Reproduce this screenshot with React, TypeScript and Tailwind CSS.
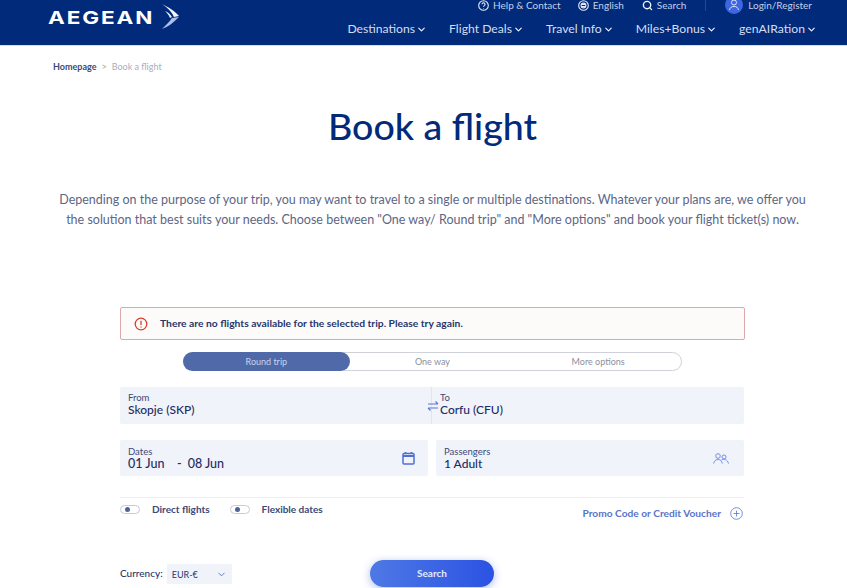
import { ChevronDown, Search } from 'lucide-react';

const navItems = ['Destinations', 'Flight Deals', 'Travel Info', 'Miles+Bonus', 'genAIRation'];

function Logo() {
  return (
    <div className="flex items-center">
      <span className="inline-block w-[105px] origin-left scale-x-[1.25] text-[18px] leading-none font-bold tracking-[1.5px] text-white font-['Inter',sans-serif]">
        AEGEAN
      </span>
      <svg width="19" height="26" viewBox="0 0 19 26" className="ml-[8px] -mt-[1px]">
        <path d="M1 0 C7 3 14 7 18 12 L13 13 C11 8 7 4 1 0Z" fill="#f2f5fc" />
        <path d="M4 7 C7 8 9 10 11 13 L9 14 C8 11 6 9 4 7Z" fill="#e8eefb" />
        <path d="M18 13 C13 18 7 23 1 25 C5 21 9 17 11 14 Z" fill="#a9c0ea" />
      </svg>
    </div>
  );
}

function TopLink({ icon, label }: { icon: React.ReactNode; label: string }) {
  return (
    <div className="flex items-center gap-[4px] text-[10px] leading-[10px] text-[#c3d0ea]">
      {icon}
      <span>{label}</span>
    </div>
  );
}

function SwapIcon() {
  return (
    <svg width="12" height="12" viewBox="0 0 12 12" fill="none" stroke="#5a74d6" strokeWidth="1.100">
      <path d="M1 4h10M8.500 1.500 11 4M11 8H1M3.500 10.500 1 8" />
    </svg>
  );
}

function Field({ label, value, className }: { label: string; value: string; className?: string }) {
  return (
    <div className={className}>
      <div className="text-[9.500px] leading-[11px] text-[#3c4a78]">{label}</div>
      <div className="text-[12px] leading-[14px] font-medium text-[#1f2c63]">{value}</div>
    </div>
  );
}

function Toggle() {
  return (
    <div className="flex h-[9px] w-[20px] items-center rounded-full border border-[#c5cbdc] bg-white pl-[4px]">
      <div className="h-[5px] w-[5px] rounded-full bg-[#4f6398]" />
    </div>
  );
}

export default function App() {
  return (
    <div className="h-[588px] overflow-hidden bg-white font-['Lato',sans-serif]">
      <header className="h-[46px] border-b border-[#d5e0f3] bg-[#012a7a]">
        <div className="ml-12 flex w-[769px] justify-between">
          <div className="pt-[5px]">
            <Logo />
          </div>
          <div className="flex flex-col items-end">
            <div className="mr-[5px] flex h-[10px] items-center">
              <TopLink
                label="Help & Contact"
                icon={
                  <svg width="11" height="11" viewBox="0 0 11 11" fill="none" stroke="#e6ecf8" strokeWidth="1.100">
                    <circle cx="5.500" cy="5.500" r="4.800" />
                    <path d="M4 4.300a1.500 1.500 0 1 1 2.300 1.300c-.5.300-.8.600-.8 1.100M5.500 8v.5" />
                  </svg>
                }
              />
              <div className="ml-[17px]">
                <TopLink
                  label="English"
                  icon={
                    <svg width="11" height="11" viewBox="0 0 11 11" fill="none" stroke="#e6ecf8" strokeWidth="1.100">
                      <circle cx="5.500" cy="5.500" r="4.800" />
                      <circle cx="5.500" cy="5.500" r="2.400" />
                      <path d="M3.200 4.500h4.600M3.200 6.500h4.600" />
                    </svg>
                  }
                />
              </div>
              <div className="ml-[18px]">
                <TopLink label="Search" icon={<Search size={11} strokeWidth={3} color="#f1f5fc" />} />
              </div>
              <div className="ml-[19px] h-[12px] w-px bg-[#27488f]" />
              <div className="ml-[19px] flex items-center gap-[5px] text-[10px] leading-[10px] text-[#c3d0ea]">
                <div className="flex h-[18px] w-[18px] items-center justify-center rounded-full bg-[#3d66e0]">
                  <svg width="12" height="12" viewBox="0 0 12 12" fill="none" stroke="#dbe5fb" strokeWidth="1">
                    <circle cx="6" cy="3.500" r="2.500" />
                    <path d="M1.500 11c.5-2.500 2-3.500 4.500-3.500s4 1 4.500 3.500" />
                  </svg>
                </div>
                <span>Login/Register</span>
              </div>
            </div>
            <nav className="mt-[11px] flex gap-[22px]">
              {navItems.map((item) => (
                <div key={item} className="flex items-center gap-[1px] text-[12.200px] leading-[16px] text-[#d3def2]">
                  {item}
                  <ChevronDown size={11} strokeWidth={2.500} color="#f1f5fc" />
                </div>
              ))}
            </nav>
          </div>
        </div>
      </header>

      <main className="ml-12 w-[769px]">
        <div className="mt-[15px] flex gap-[5px] pl-[5px] text-[9px] leading-[12px]">
          <span className="font-bold text-[#3b4a78]">Homepage</span>
          <span className="text-[#9aa1b5]">&gt;</span>
          <span className="text-[#a9aebd]">Book a flight</span>
        </div>

        <h1 className="mt-[31px] text-center text-[37.500px] leading-[44px] font-medium text-[#012a7a]">
          Book a flight
        </h1>

        <p className="mt-[42px] px-[10px] text-center text-[12.500px] leading-[20px] text-[#5d6685]">
          Depending on the purpose of your trip, you may want to travel to a single or multiple destinations. Whatever your plans are, we offer you the solution that best suits your needs. Choose between "One way/ Round trip" and "More options" and book your flight ticket(s) now.
        </p>

        <section className="mx-[72px] mt-[77px]">
          <div className="flex h-[33px] items-center gap-[12px] rounded-[2px] border border-[#dba9a9] bg-[#fdfbf9] pl-[13px] text-[10.300px] font-bold text-[#27366b]">
            <svg width="14" height="14" viewBox="0 0 14 14" fill="none" stroke="#d8402f" strokeWidth="1.300">
              <circle cx="7" cy="7" r="5.800" />
              <path d="M7 3.700v4.200M7 9.600v.8" />
            </svg>
            <span>There are no flights available for the selected trip. Please try again.</span>
          </div>

          <div className="mx-[63px] mt-[12px] flex h-[19px] w-[499px] items-center rounded-full border border-[#cfd2da] text-center text-[9px] text-[#8a8fa0]">
            <div className="-ml-px flex h-[19px] w-[167px] items-center justify-center rounded-full bg-[#5069a8] text-[#c9d3ea]">
              Round trip
            </div>
            <div className="w-[166px]">One way</div>
            <div className="w-[166px]">More options</div>
          </div>

          <div className="mt-[16px] flex h-[37px] w-[624px] rounded-[2px] bg-[#f0f3f9]">
            <Field label="From" value="Skopje (SKP)" className="w-[312px] border-r border-[#e1e5ee] pl-[8px] pt-[5px]" />
            <div className="-ml-[5px] flex items-center">
              <SwapIcon />
            </div>
            <Field label="To" value="Corfu (CFU)" className="pt-[5px] pl-[1px]" />
          </div>

          <div className="mt-[16px] flex w-[624px] gap-[8px]">
            <div className="flex h-[36px] w-[308px] items-center justify-between rounded-[2px] bg-[#f0f3f9] pl-[8px] pr-[13px]">
              <div>
                <div className="text-[9.500px] leading-[11px] text-[#3c4a78]">Dates</div>
                <div className="flex text-[12.500px] leading-[13px] font-medium text-[#1f2c63]">
                  <span className="w-[49px]">01 Jun</span>
                  <span>-</span>
                  <span className="ml-[6px]">08 Jun</span>
                </div>
              </div>
              <svg width="13" height="14" viewBox="0 0 13 14" fill="none" stroke="#4f6fd8" strokeWidth="1.500">
                <rect x="1" y="2.500" width="11" height="10.500" rx="1" />
                <path d="M1 5h11M3.500 1v2M9.500 1v2" strokeWidth="1.800" />
              </svg>
            </div>
            <div className="flex h-[36px] w-[308px] items-center justify-between rounded-[2px] bg-[#f0f3f9] pl-[8px] pr-[15px]">
              <Field label="Passengers" value="1 Adult" />
              <svg width="16" height="11" viewBox="0 0 16 11" fill="none" stroke="#6b83dc" strokeWidth="0.900">
                <circle cx="5" cy="3" r="2.300" />
                <path d="M.7 10.500c.3-2.500 2-4 4.300-4s4 1.500 4.300 4" />
                <circle cx="11" cy="4" r="2" />
                <path d="M8.500 7c2.500-1.500 6-.5 7 3.500" />
              </svg>
            </div>
          </div>

          <div className="mt-[21px] flex w-[624px] items-start justify-between border-t border-[#edeff4] pt-[5px]">
            <div className="flex items-center text-[10px] leading-[12px] font-bold text-[#3b4a78]">
              <Toggle />
              <span className="ml-[12px]">Direct flights</span>
              <div className="ml-[20px]">
                <Toggle />
              </div>
              <span className="ml-[12px]">Flexible dates</span>
            </div>
            <div className="mt-[3px] mr-[1px] flex items-center gap-[9px] text-[10.200px] font-bold text-[#5a74c8]">
              <span>Promo Code or Credit Voucher</span>
              <svg width="13" height="13" viewBox="0 0 13 13" fill="none" stroke="#6b83cc" strokeWidth="0.900">
                <circle cx="6.500" cy="6.500" r="5.800" />
                <path d="M6.500 3.500v6M3.500 6.500h6" />
              </svg>
            </div>
          </div>

          <div className="mt-[39px] grid w-[624px] grid-cols-[250px_124px_250px] items-start">
            <div className="mt-[4px] flex items-center gap-[4px]">
              <span className="-mt-[2px] text-[10px] font-medium text-[#27366b]">Currency:</span>
              <div className="flex h-[20px] w-[65px] items-center justify-between bg-[#f0f3f9] pl-[5px] pr-[5px] text-[9px] text-[#27366b]">
                EUR-€
                <ChevronDown size={11} color="#5a74c8" />
              </div>
            </div>
            <button className="h-[27px] rounded-full bg-linear-to-r from-[#4f78e6] to-[#2b52e2] text-[10px] font-bold text-[#e3eafb] shadow-[0_2px_8px_rgba(60,90,200,0.4)]">
              Search
            </button>
          </div>
        </section>
      </main>
    </div>
  );
}
